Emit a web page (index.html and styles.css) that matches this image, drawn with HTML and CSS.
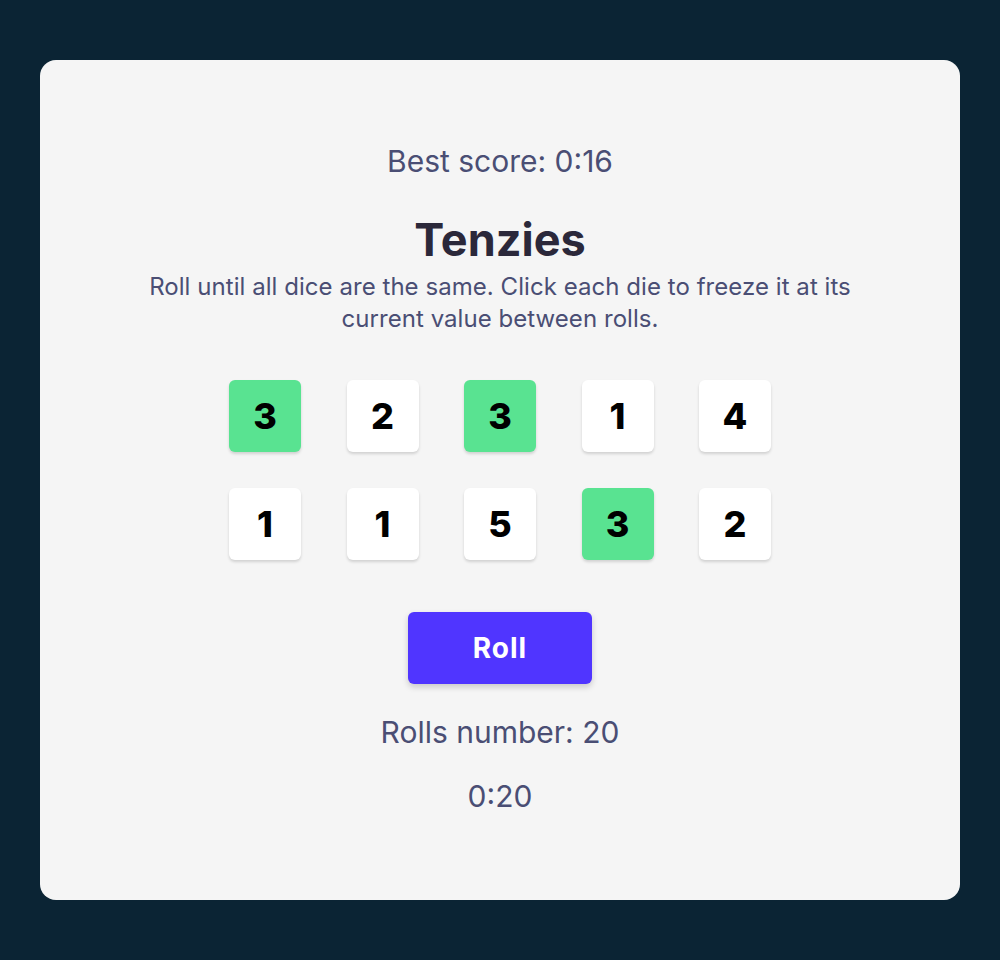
FILE: index.html
```html
<!DOCTYPE html>
<html lang="en">
<head>
<meta charset="utf-8">
<title>Tenzies</title>
<link rel="stylesheet" href="styles.css">
</head>
<body>
<main class="card">
  <p class="best">Best score: 0:16</p>
  <h1 class="title">Tenzies</h1>
  <p class="instructions">Roll until all dice are the same. Click each die to freeze it at its current value between rolls.</p>
  <div class="dice">
    <button class="die held">3</button>
    <button class="die">2</button>
    <button class="die held">3</button>
    <button class="die">1</button>
    <button class="die">4</button>
    <button class="die">1</button>
    <button class="die">1</button>
    <button class="die">5</button>
    <button class="die held">3</button>
    <button class="die">2</button>
  </div>
  <button class="roll">Roll</button>
  <p class="stat">Rolls number: 20</p>
  <p class="stat timer">0:20</p>
</main>
</body>
</html>
```
FILE: styles.css
```css
* { box-sizing: border-box; }
html, body { margin: 0; padding: 0; }
body {
  background: #0B2434;
  font-family: "Inter", "Noto Sans", sans-serif;
  padding: 60px 40px;
}
.card {
  background: #F5F5F5;
  border-radius: 16px;
  height: 840px;
  display: flex;
  flex-direction: column;
  align-items: center;
  padding-top: 84px;
}
.best {
  margin: 0;
  font-size: 30px;
  line-height: 34px;
  color: #4A4E74;
}
.title {
  margin: 38px 0 0;
  font-size: 45px;
  line-height: 48px;
  font-weight: 700;
  color: #2B283A;
}
.instructions {
  margin: 7px 0 0;
  max-width: 760px;
  text-align: center;
  font-size: 24px;
  line-height: 32px;
  letter-spacing: 0.05px;
  color: #4A4E74;
}
.dice {
  margin-top: 45px;
  display: grid;
  grid-template-columns: repeat(5, 72px);
  grid-auto-rows: 72px;
  column-gap: 45.5px;
  row-gap: 36px;
}
.die {
  border: none;
  border-radius: 6px;
  background: #FFFFFF;
  box-shadow: 0 2px 3px rgba(0, 0, 0, 0.15);
  font-family: "Inter", sans-serif;
  font-weight: 800;
  font-size: 36px;
  color: #000;
  padding: 0;
}
.die.held { background: #59E391; }
.roll {
  margin-top: 52px;
  width: 184px;
  height: 72px;
  border: none;
  border-radius: 6px;
  background: #5035FF;
  color: #fff;
  font-family: "Inter", sans-serif;
  font-weight: 700;
  font-size: 28px;
  letter-spacing: 1px;
  box-shadow: 0 3px 6px rgba(0, 0, 0, 0.18);
}
.stat {
  margin: 31px 0 0;
  font-size: 30px;
  line-height: 34px;
  color: #4A4E74;
}
.timer { margin-top: 30px; }
```
